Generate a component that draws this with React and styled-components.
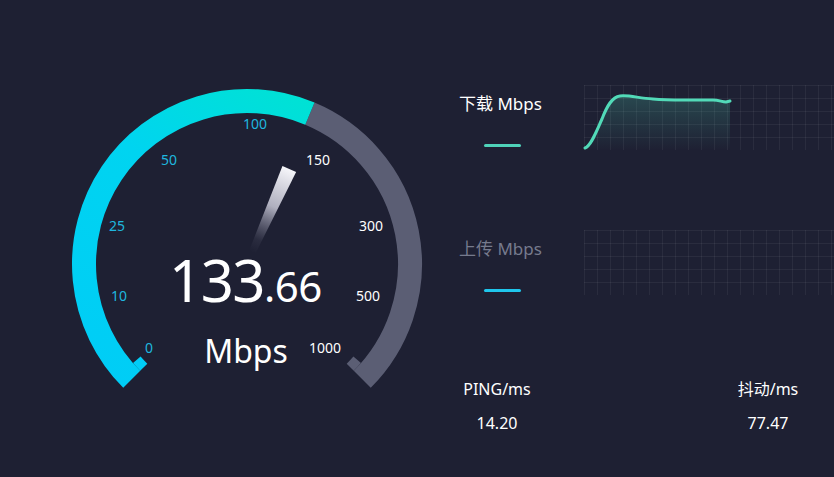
import React from 'react'
import styled, { createGlobalStyle } from 'styled-components'

const GlobalStyle = createGlobalStyle`
  html, body {
    margin: 0;
    padding: 0;
    background: #1e2033;
  }
  body {
    font-family: "Noto Sans", "Noto Sans CJK SC", sans-serif;
    color: #ffffff;
  }
`

const Page = styled.div`
  width: 834px;
  height: 477px;
  display: flex;
  overflow: hidden;
  background: #1e2033;
`

const GaugeBox = styled.div`
  width: 459px;
  height: 477px;
  flex: none;
`

const Panel = styled.div`
  flex: 1;
  display: flex;
  flex-direction: column;
  padding-top: 85px;
`

const Row = styled.div`
  display: grid;
  grid-template-columns: 125px 1fr;
  height: 145px;
`

const Legend = styled.div`
  display: flex;
  flex-direction: column;
`

const Title = styled.div`
  margin-top: 9px;
  font-size: 17px;
  line-height: 20px;
  color: ${({ dim }) => (dim ? '#767a8d' : '#ffffff')};
  white-space: nowrap;
`

const Swatch = styled.div`
  margin-top: ${({ offset }) => offset}px;
  margin-left: 25px;
  width: 37px;
  height: 3px;
  border-radius: 2px;
  background: ${({ color }) => color};
`

const Chart = styled.div`
  position: relative;
  height: 65px;
  background-image:
    linear-gradient(to right, rgba(255, 255, 255, 0.055) 1px, transparent 1px),
    linear-gradient(to bottom, rgba(255, 255, 255, 0.055) 1px, transparent 1px);
  background-size: 13px 13px;

  svg {
    display: block;
    overflow: visible;
  }
`

const Stats = styled.div`
  display: flex;
  justify-content: space-between;
  padding-right: 28px;
  margin-top: 4px;
`

const Stat = styled.div`
  width: 76px;
  display: flex;
  flex-direction: column;
  align-items: center;
  gap: 14px;
`

const StatLabel = styled.div`
  font-size: 16px;
  line-height: 20px;
  white-space: nowrap;
`

const StatValue = styled.div`
  font-size: 16px;
  line-height: 20px;
`

const CX = 247
const CY = 264

const pt = (a, r) => {
  const rad = (a * Math.PI) / 180
  return [CX + r * Math.sin(rad), CY - r * Math.cos(rad)]
}

const arc = (a0, a1, r) => {
  const [x0, y0] = pt(a0, r)
  const [x1, y1] = pt(a1, r)
  const large = a1 - a0 > 180 ? 1 : 0
  return `M${x0},${y0} A${r},${r} 0 ${large} 1 ${x1},${y1}`
}

const labels = [
  { t: '0', x: 149, y: 348, on: true },
  { t: '10', x: 119, y: 296, on: true },
  { t: '25', x: 117, y: 226, on: true },
  { t: '50', x: 169, y: 160, on: true },
  { t: '100', x: 255, y: 124, on: true },
  { t: '150', x: 318, y: 160 },
  { t: '300', x: 371, y: 226 },
  { t: '500', x: 368, y: 296 },
  { t: '1000', x: 325, y: 348 },
]

function Gauge({ angle }) {
  const na = 24
  const tip = pt(na, 104)
  const base = pt(na, 13)
  const nx = Math.cos((na * Math.PI) / 180)
  const ny = Math.sin((na * Math.PI) / 180)
  const needle = [
    [tip[0] + 7.5 * nx, tip[1] + 7.5 * ny],
    [tip[0] - 7.5 * nx, tip[1] - 7.5 * ny],
    [base[0] - 3.5 * nx, base[1] - 3.5 * ny],
    [base[0] + 3.5 * nx, base[1] + 3.5 * ny],
  ]
    .map((p) => p.join(','))
    .join(' ')

  const tickA = arc(-135, -131, 146)
  const tickB = arc(131, 135, 146)

  return (
    <svg width="459" height="477" viewBox="0 0 459 477">
      <defs>
        <linearGradient id="prog" gradientUnits="userSpaceOnUse" x1="123" y1="388" x2="310" y2="100">
          <stop offset="0" stopColor="#00cdf6" />
          <stop offset="0.6" stopColor="#00d4f0" />
          <stop offset="1" stopColor="#00e2d4" />
        </linearGradient>
        <linearGradient
          id="needle"
          gradientUnits="userSpaceOnUse"
          x1={tip[0]}
          y1={tip[1]}
          x2={base[0]}
          y2={base[1]}
        >
          <stop offset="0" stopColor="#f6f6fa" stopOpacity="1" />
          <stop offset="0.45" stopColor="#d4d4e2" stopOpacity="0.8" />
          <stop offset="0.85" stopColor="#9a9ab0" stopOpacity="0.1" />
          <stop offset="1" stopColor="#9a9ab0" stopOpacity="0" />
        </linearGradient>
      </defs>

      <path d={arc(angle, 135, 163)} stroke="#5b5e74" strokeWidth="24" fill="none" />
      <path d={arc(-135, angle, 163)} stroke="url(#prog)" strokeWidth="24" fill="none" />
      <path d={tickA} stroke="#00cdf6" strokeWidth="10" fill="none" />
      <path d={tickB} stroke="#5b5e74" strokeWidth="10" fill="none" />

      {labels.map((l) => (
        <text
          key={l.t}
          x={l.x}
          y={l.y + 5}
          textAnchor="middle"
          fontSize="14"
          fontFamily='"Noto Sans", sans-serif'
          fill={l.on ? '#1fb7df' : '#ffffff'}
        >
          {l.t}
        </text>
      ))}

      <polygon points={needle} fill="url(#needle)" />

      <text x="169" y="302" fill="#ffffff" fontFamily='"Noto Sans", sans-serif'>
        <tspan fontSize="58" letterSpacing="-1.5">133</tspan>
        <tspan fontSize="42" letterSpacing="-0.5">.66</tspan>
      </text>
      <text x="246" y="363" textAnchor="middle" fill="#ffffff" fontSize="32" fontFamily='"Noto Sans", sans-serif'>
        Mbps
      </text>
    </svg>
  )
}

function DownloadCurve() {
  const line =
    'M1,63 C7,61 12,47 18,34 C23,21 28,12 36,11 C45,10 54,13 69,14 C80,15 90,15 100,15 L129,15 C135,15 138,17 142,17 L146,16'
  return (
    <svg width="250" height="65" viewBox="0 0 250 65">
      <defs>
        <linearGradient id="area" x1="0" y1="0" x2="0" y2="1">
          <stop offset="0" stopColor="#4fd8b5" stopOpacity="0.22" />
          <stop offset="1" stopColor="#4fd8b5" stopOpacity="0" />
        </linearGradient>
      </defs>
      <path d={`${line} L146,65 L1,65 Z`} fill="url(#area)" />
      <path d={line} stroke="#52dab8" strokeWidth="3" fill="none" strokeLinecap="round" />
    </svg>
  )
}

export default function App() {
  return (
    <>
      <GlobalStyle />
      <Page>
        <GaugeBox>
          <Gauge angle={22.7} />
        </GaugeBox>
        <Panel>
          <Row>
            <Legend>
              <Title>下载 Mbps</Title>
              <Swatch color="#4fd2b9" offset={30} />
            </Legend>
            <Chart>
              <DownloadCurve />
            </Chart>
          </Row>
          <Row>
            <Legend>
              <Title dim>上传 Mbps</Title>
              <Swatch color="#1fc6ec" offset={30} />
            </Legend>
            <Chart />
          </Row>
          <Stats>
            <Stat>
              <StatLabel>PING/ms</StatLabel>
              <StatValue>14.20</StatValue>
            </Stat>
            <Stat>
              <StatLabel>抖动/ms</StatLabel>
              <StatValue>77.47</StatValue>
            </Stat>
          </Stats>
        </Panel>
      </Page>
    </>
  )
}
